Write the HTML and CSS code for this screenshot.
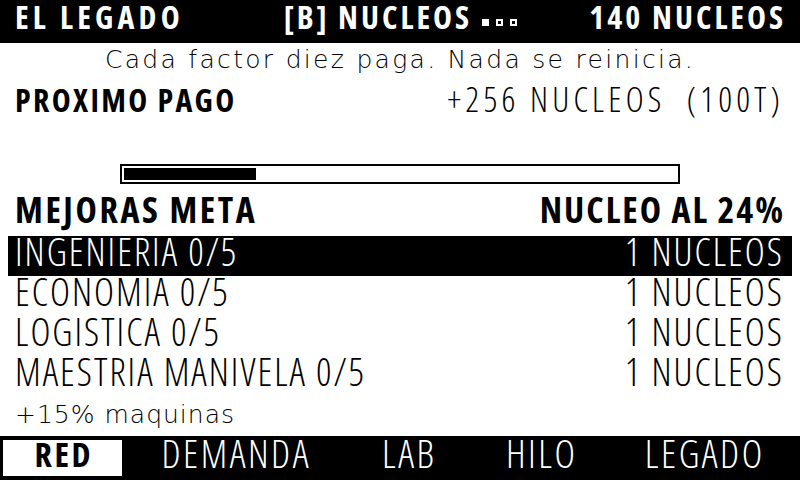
FILE: index.html
```html
<!DOCTYPE html>
<html lang="es">
<head>
<meta charset="utf-8">
<title>El Legado</title>
<link rel="stylesheet" href="styles.css">
</head>
<body>
<div class="screen">
  <header class="top">
    <span class="top-left">EL LEGADO</span>
    <span class="top-mid">[B] NUCLEOS<span class="dots"><i class="dot on"></i><i class="dot"></i><i class="dot"></i></span></span>
    <span class="top-right">140 NUCLEOS</span>
  </header>

  <main class="content">
    <p class="sub">Cada factor diez paga. Nada se reinicia.</p>
    <div class="pay">
      <span class="pay-label">PROXIMO PAGO</span>
      <span class="pay-value">+256 NUCLEOS  (100T)</span>
    </div>
    <div class="bar"><div class="fill" style="width:24%"></div></div>
    <div class="meta">
      <span>MEJORAS META</span>
      <span>NUCLEO AL 24%</span>
    </div>
    <ul class="list">
      <li class="row sel"><span>INGENIERIA 0/5</span><span>1 NUCLEOS</span></li>
      <li class="row"><span>ECONOMIA 0/5</span><span>1 NUCLEOS</span></li>
      <li class="row"><span>LOGISTICA 0/5</span><span>1 NUCLEOS</span></li>
      <li class="row"><span>MAESTRIA MANIVELA 0/5</span><span>1 NUCLEOS</span></li>
    </ul>
    <p class="note">+15% maquinas</p>
  </main>

  <nav class="tabs">
    <span class="tab active">RED</span>
    <span class="tab">DEMANDA</span>
    <span class="tab">LAB</span>
    <span class="tab">HILO</span>
    <span class="tab">LEGADO</span>
  </nav>
</div>
</body>
</html>
```
FILE: styles.css
```css
html, body {
  margin: 0;
  padding: 0;
  background: #fff;
}

.screen {
  width: 800px;
  height: 480px;
  display: flex;
  flex-direction: column;
  background: #fff;
  color: #000;
  font-family: "Open Sans", "DejaVu Sans", sans-serif;
  font-stretch: 75%;
  overflow: hidden;
}

/* ---------- top bar ---------- */
.top {
  height: 43px;
  flex: none;
  background: #000;
  color: #fff;
  display: grid;
  grid-template-columns: 1fr auto 1fr;
  align-items: start;
  padding: 0 14px 0 15px;
  font-size: 32px;
  font-weight: 700;
  letter-spacing: 3px;
  line-height: 33px;
  white-space: nowrap;
}
.top-left {
  justify-self: start;
  letter-spacing: 4.2px;
}
.top-mid { justify-self: center; }
.top-right { justify-self: end; }

.dots {
  display: inline-flex;
  gap: 7px;
  margin-left: 10px;
  vertical-align: 3px;
}
.dot {
  width: 7px;
  height: 7px;
  box-sizing: border-box;
  border: 2px solid #fff;
  display: block;
}
.dot.on { background: #fff; }

/* ---------- content ---------- */
.content {
  flex: 1;
  display: flex;
  flex-direction: column;
}

.sub {
  margin: 0;
  height: 33px;
  line-height: 33px;
  text-align: center;
  font-family: "DejaVu Sans", sans-serif;
  font-stretch: normal;
  font-weight: 200;
  font-size: 25px;
  letter-spacing: 2.3px;
  white-space: nowrap;
}

.pay {
  height: 47px;
  display: flex;
  justify-content: space-between;
  align-items: baseline;
  padding: 0 16px 0 15px;
  line-height: 47px;
  white-space: pre;
}
.pay-label {
  font-size: 32px;
  font-weight: 700;
  letter-spacing: 2.3px;
}
.pay-value {
  font-size: 34px;
  font-weight: 300;
  letter-spacing: 4.2px;
}

.bar {
  box-sizing: border-box;
  width: 560px;
  height: 20px;
  margin: 41px 0 0 120px;
  border: 2px solid #000;
  padding: 2px;
}
.fill {
  height: 100%;
  background: #000;
}

.meta {
  height: 52px;
  line-height: 52px;
  display: flex;
  justify-content: space-between;
  padding: 0 15px 0 15px;
  font-size: 36px;
  font-weight: 700;
  letter-spacing: 2.6px;
  white-space: nowrap;
}
.meta span:last-child { letter-spacing: 2px; }

.list {
  list-style: none;
  margin: 0 8px;
  padding: 0;
}
.row {
  height: 40px;
  box-sizing: border-box;
  padding: 0 8px 9px 7px;
  line-height: 31px;
  display: flex;
  justify-content: space-between;
  font-size: 38px;
  font-weight: 300;
  letter-spacing: 2px;
  white-space: nowrap;
}
.row.sel {
  background: #000;
  color: #fff;
}

.note {
  margin: 0;
  padding-left: 15px;
  height: 37px;
  line-height: 37px;
  font-family: "DejaVu Sans", sans-serif;
  font-stretch: normal;
  font-weight: 200;
  font-size: 25px;
  letter-spacing: 1px;
  white-space: nowrap;
}

/* ---------- bottom tabs ---------- */
.tabs {
  margin-top: auto;
  height: 44px;
  flex: none;
  box-sizing: border-box;
  background: #000;
  color: #fff;
  display: grid;
  grid-template-columns: 119px 206px 120px 125px 181px;
  column-gap: 10px;
  padding: 4px 0 4px 3px;
}
.tab {
  height: 36px;
  box-sizing: border-box;
  text-align: center;
  font-size: 39px;
  font-weight: 300;
  letter-spacing: 2.5px;
  line-height: 26px;
  padding: 0 0 10px 2.5px;
  white-space: nowrap;
}
.tab.active {
  background: #fff;
  color: #000;
  font-size: 34px;
  font-weight: 700;
  letter-spacing: 2.5px;
  line-height: 28px;
  padding: 0 0 8px 2.5px;
}
```
